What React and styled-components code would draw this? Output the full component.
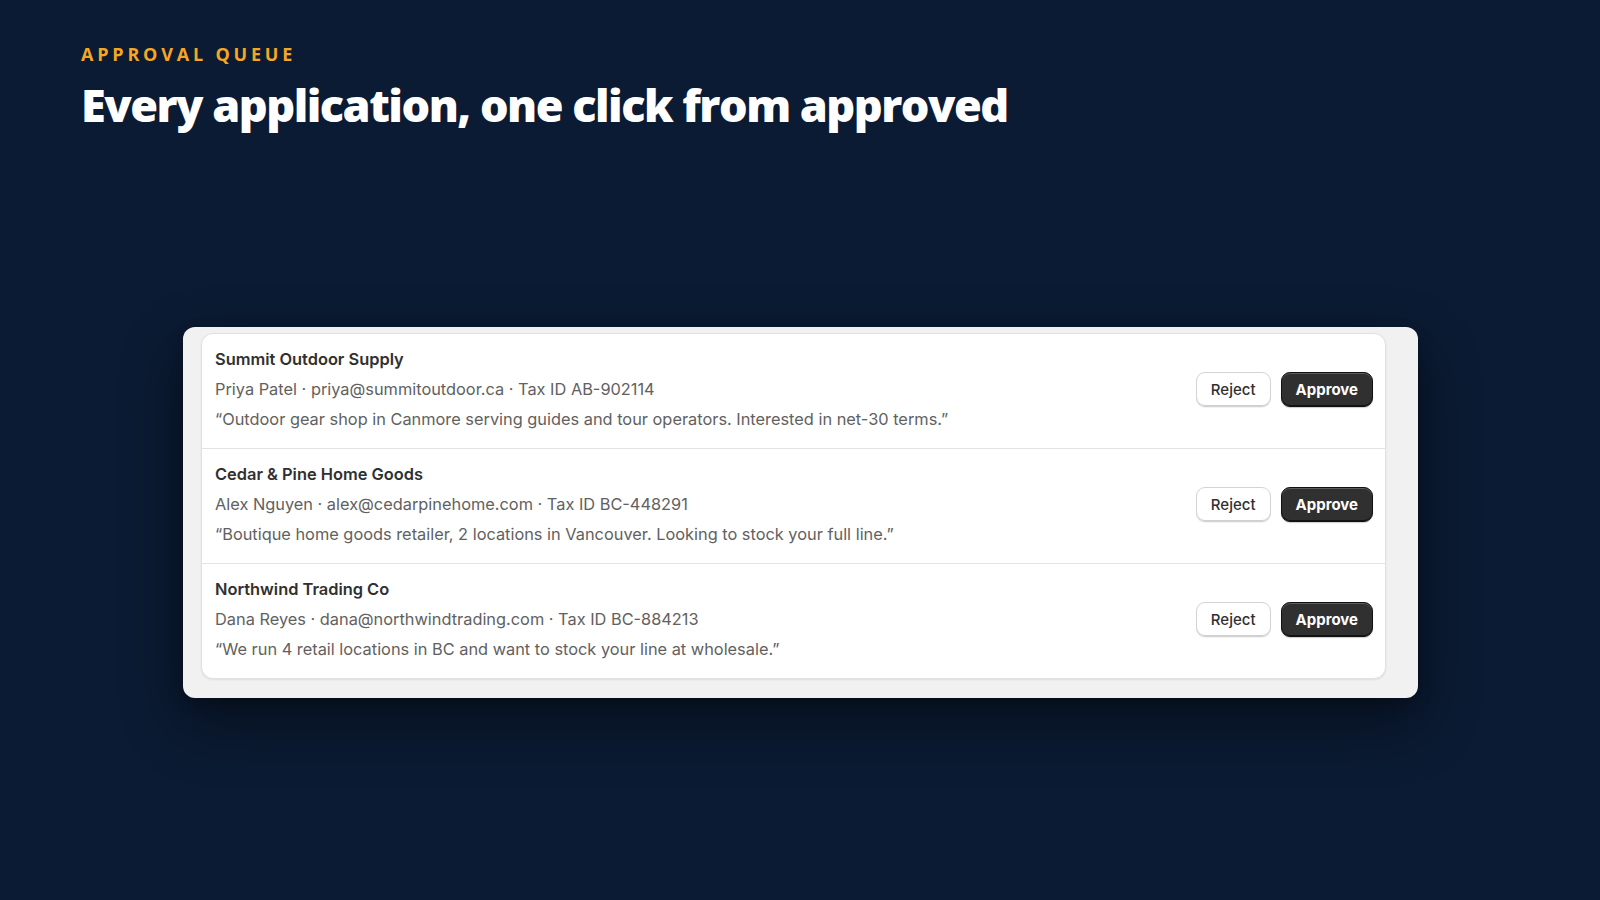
import React from "react";
import styled, { createGlobalStyle } from "styled-components";

const Global = createGlobalStyle`
  html, body { margin: 0; padding: 0; }
  body {
    background: #0b1b33;
    font-family: Inter, "Noto Sans", sans-serif;
    -webkit-font-smoothing: antialiased;
  }
`;

const Page = styled.div`
  width: 1600px;
  height: 900px;
  box-sizing: border-box;
  padding: 41px 0 0 81px;
  display: flex;
  flex-direction: column;
`;

const Eyebrow = styled.div`
  font-family: "Open Sans", sans-serif;
  font-weight: 700;
  font-size: 18px;
  letter-spacing: 3.8px;
  color: #f5a623;
  line-height: 26px;
`;

const Heading = styled.h1`
  margin: 10px 0 0 0;
  font-family: "Open Sans", sans-serif;
  font-weight: 800;
  font-size: 45px;
  line-height: 56px;
  letter-spacing: -1.5px;
  color: #ffffff;
`;

const Stage = styled.div`
  margin: 194px 0 0 102px;
  width: 1235px;
  box-sizing: border-box;
  padding: 6px 32px 19px 18px;
  background: #f1f1f1;
  border-radius: 12px;
  box-shadow: 0 24px 60px rgba(0, 0, 0, 0.45), 0 4px 14px rgba(0, 0, 0, 0.25);
`;

const List = styled.div`
  background: #ffffff;
  border: 1px solid #e1e1e1;
  border-radius: 12px;
  box-shadow: 0 1px 2px rgba(0, 0, 0, 0.08);
  overflow: hidden;
`;

const Row = styled.div`
  display: flex;
  align-items: center;
  padding: 10px 12px 14px 13px;
  border-top: ${(p) => (p.$first ? "none" : "1px solid #e3e3e3")};
`;

const Info = styled.div`
  flex: 1;
  display: flex;
  flex-direction: column;
`;

const Name = styled.div`
  font-size: 16.4px;
  font-weight: 600;
  color: #303030;
  line-height: 30px;
`;

const Meta = styled.div`
  font-size: 16.35px;
  font-weight: 400;
  color: #616161;
  line-height: 30px;
`;

const Actions = styled.div`
  display: flex;
  gap: 10px;
  margin-bottom: 0px;
`;

const Button = styled.button`
  height: 35px;
  box-sizing: border-box;
  border-radius: 9px;
  font-family: Inter, sans-serif;
  font-size: 15px;
  padding: 0 14px;
  cursor: pointer;
  background: ${(p) => (p.$primary ? "#303030" : "#ffffff")};
  color: ${(p) => (p.$primary ? "#ffffff" : "#303030")};
  font-weight: ${(p) => (p.$primary ? 700 : 500)};
  border: 1px solid ${(p) => (p.$primary ? "#121212" : "#d4d4d4")};
  box-shadow: ${(p) =>
    p.$primary
      ? "inset 0 1px 0 rgba(255,255,255,0.22), inset 0 -1px 0 rgba(0,0,0,0.6), 0 1px 1px rgba(0,0,0,0.2)"
      : "inset 0 -1px 0 #cfcfcf, 0 1px 0 rgba(0,0,0,0.05)"};
`;

const rows = [
  {
    name: "Summit Outdoor Supply",
    meta: "Priya Patel · priya@summitoutdoor.ca · Tax ID AB-902114",
    quote: "“Outdoor gear shop in Canmore serving guides and tour operators. Interested in net-30 terms.”",
  },
  {
    name: "Cedar & Pine Home Goods",
    meta: "Alex Nguyen · alex@cedarpinehome.com · Tax ID BC-448291",
    quote: "“Boutique home goods retailer, 2 locations in Vancouver. Looking to stock your full line.”",
  },
  {
    name: "Northwind Trading Co",
    meta: "Dana Reyes · dana@northwindtrading.com · Tax ID BC-884213",
    quote: "“We run 4 retail locations in BC and want to stock your line at wholesale.”",
  },
];

export default function App() {
  return (
    <>
      <Global />
      <Page>
        <Eyebrow>APPROVAL QUEUE</Eyebrow>
        <Heading>Every application, one click from approved</Heading>
        <Stage>
          <List>
            {rows.map((r, i) => (
              <Row key={r.name} $first={i === 0}>
                <Info>
                  <Name>{r.name}</Name>
                  <Meta>{r.meta}</Meta>
                  <Meta>{r.quote}</Meta>
                </Info>
                <Actions>
                  <Button>Reject</Button>
                  <Button $primary>Approve</Button>
                </Actions>
              </Row>
            ))}
          </List>
        </Stage>
      </Page>
    </>
  );
}
